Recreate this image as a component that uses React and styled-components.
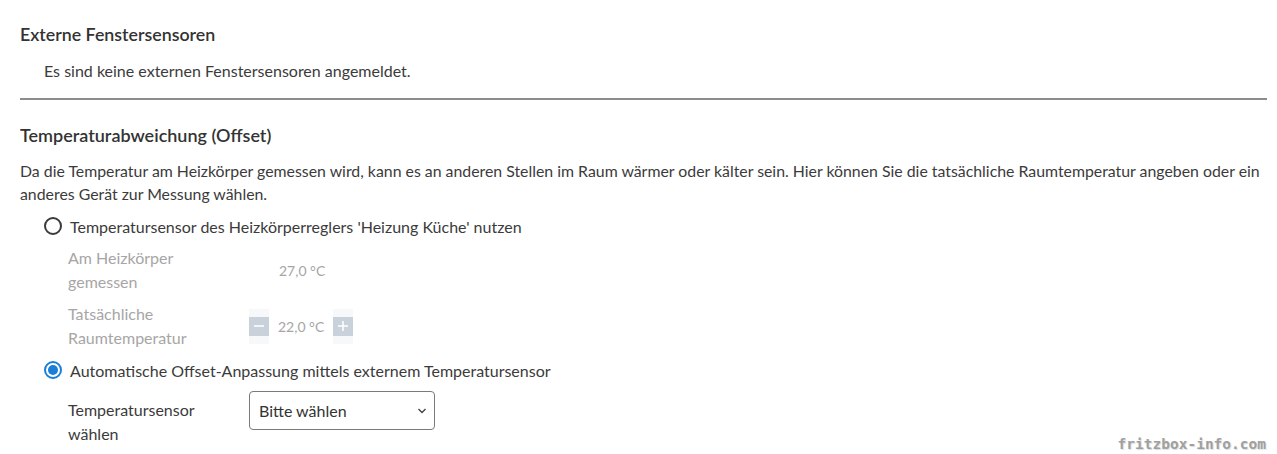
import React from "react";
import styled, { createGlobalStyle } from "styled-components";

const Global = createGlobalStyle`
  html, body { margin: 0; padding: 0; background: #fff; }
  body { font-family: "Source Sans Pro", Lato, "Noto Sans", sans-serif; color: #3b3b3b; }
`;

const Page = styled.div`
  position: relative;
  width: 1277px;
  height: 454px;
  overflow: hidden;
  padding: 0 10px 0 20px;
  box-sizing: border-box;
`;

const Section = styled.section`
  display: flex;
  flex-direction: column;
`;

const Heading = styled.h3`
  margin: 0;
  font-size: ${(p) => (p.$large ? "18px" : "17.8px")};
  font-weight: 600;
  color: #333;
  line-height: 24px;
  padding-top: ${(p) => p.$top}px;
`;

const Info = styled.p`
  margin: 13px 0 0 24px;
  font-size: 16px;
  line-height: 24px;
`;

const Rule = styled.hr`
  margin: 15px 0 0 0;
  border: 0;
  height: 2px;
  background: #8c8c8c;
`;

const Para = styled.p`
  margin: 12px 0 0 0;
  font-size: 15.85px;
  line-height: 23px;
`;

const Options = styled.div`
  display: flex;
  flex-direction: column;
  padding-left: 24px;
`;

const RadioRow = styled.label`
  display: flex;
  align-items: center;
  gap: 8px;
  height: 24px;
  margin-top: ${(p) => p.$top}px;
  font-size: 16px;
`;

const Radio = styled.span`
  width: 18px;
  height: 18px;
  box-sizing: border-box;
  border-radius: 50%;
  border: 2px solid ${(p) => (p.$checked ? "#1b7fd8" : "#3a3a3a")};
  display: flex;
  align-items: center;
  justify-content: center;
  &::after {
    content: "";
    width: 10px;
    height: 10px;
    border-radius: 50%;
    background: ${(p) => (p.$checked ? "#1b7fd8" : "transparent")};
  }
`;

const FieldRow = styled.div`
  display: grid;
  grid-template-columns: 181px auto;
  align-items: ${(p) => (p.$start ? "start" : "center")};
  margin-top: ${(p) => p.$top}px;
  padding-left: 48px;
`;

const FieldLabel = styled.div`
  font-size: 16px;
  line-height: 24px;
  color: ${(p) => (p.$disabled ? "#a6a6a6" : "#3b3b3b")};
  width: 140px;
  padding-top: ${(p) => p.$pt || 0}px;
`;

const Value = styled.span`
  font-size: 14px;
  color: #a6a6a6;
  padding-left: ${(p) => p.$pad || 0}px;
`;

const Stepper = styled.div`
  display: flex;
  align-items: center;
  gap: 9px;
`;

const StepBtn = styled.span`
  position: relative;
  width: 20px;
  height: 35px;
  background: #f7f8f9;
  display: flex;
  align-items: center;
  justify-content: center;
  &::before {
    content: "";
    display: block;
    width: 20px;
    height: 19px;
    background: #c9d2db;
  }
  svg { position: absolute; }
`;

const Select = styled.div`
  width: 186px;
  height: 39px;
  box-sizing: border-box;
  border: 1px solid #7a7a7a;
  border-radius: 4px;
  display: flex;
  align-items: center;
  justify-content: space-between;
  padding: 0 7px 0 9px;
  font-size: 16px;
  color: #333;
`;

const Watermark = styled.div`
  position: absolute;
  right: 11px;
  bottom: 2px;
  font-family: "DejaVu Sans Mono", monospace;
  font-weight: bold;
  font-size: 14.5px;
  color: #a0a0a0;
  text-shadow: 1px 1px 1px #dcdcdc;
`;

const Minus = () => (
  <svg width="12" height="12" viewBox="0 0 12 12">
    <path d="M1 6h10" stroke="#fff" strokeWidth="1.5" />
  </svg>
);
const Plus = () => (
  <svg width="12" height="12" viewBox="0 0 12 12">
    <path d="M1 6h10M6 1v10" stroke="#fff" strokeWidth="1.5" />
  </svg>
);
const Chevron = () => (
  <svg width="10" height="6" viewBox="0 0 10 6">
    <path d="M1.5 1l3.5 3.5L8.5 1" stroke="#444" strokeWidth="1.4" fill="none" />
  </svg>
);

export default function App() {
  return (
    <Page>
      <Global />
      <Section>
        <Heading $top={22}>Externe Fenstersensoren</Heading>
        <Info>Es sind keine externen Fenstersensoren angemeldet.</Info>
        <Rule />
      </Section>
      <Section>
        <Heading $large $top={23}>Temperaturabweichung (Offset)</Heading>
        <Para>
          Da die Temperatur am Heizkörper gemessen wird, kann es an anderen Stellen im Raum wärmer oder kälter sein. Hier können Sie die tatsächliche Raumtemperatur angeben oder ein anderes Gerät zur Messung wählen.
        </Para>
        <Options>
          <RadioRow $top={9}>
            <Radio />
            Temperatursensor des Heizkörperreglers 'Heizung Küche' nutzen
          </RadioRow>
        </Options>
        <FieldRow $top={8}>
          <FieldLabel $disabled>Am Heizkörper gemessen</FieldLabel>
          <Value $pad={30}>27,0 °C</Value>
        </FieldRow>
        <FieldRow $top={8}>
          <FieldLabel $disabled>Tatsächliche Raumtemperatur</FieldLabel>
          <Stepper>
            <StepBtn><Minus /></StepBtn>
            <Value>22,0 °C</Value>
            <StepBtn><Plus /></StepBtn>
          </Stepper>
        </FieldRow>
        <Options>
          <RadioRow $top={8}>
            <Radio $checked />
            Automatische Offset-Anpassung mittels externem Temperatursensor
          </RadioRow>
        </Options>
        <FieldRow $top={9} $start>
          <FieldLabel $pt={7}>Temperatursensor wählen</FieldLabel>
          <Select>
            Bitte wählen
            <Chevron />
          </Select>
        </FieldRow>
      </Section>
      <Watermark>fritzbox-info.com</Watermark>
    </Page>
  );
}
